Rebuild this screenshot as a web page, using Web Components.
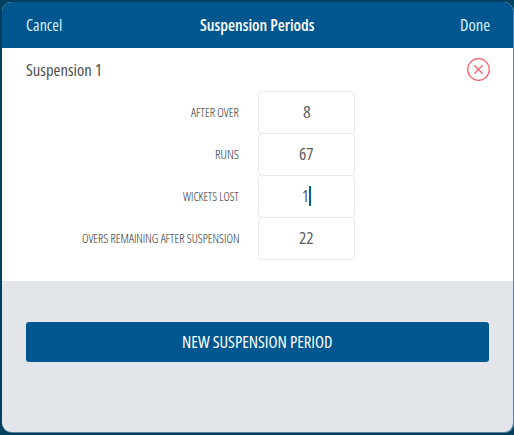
<!DOCTYPE html>
<html lang="en">
<head>
<meta charset="utf-8">
<title>Suspension Periods</title>
<style>
    html, body { margin: 0; height: 100%; }
    body {
        background: #00405f;
        color: #4b4f52;
        font-family: "Open Sans", "Noto Sans", sans-serif;
        font-stretch: 75%;
        font-size: 16px;
        overflow: hidden;
    }
</style>
</head>
<body>
<suspension-dialog>
    <dialog-header slot="header">
        <fit-text slot="left" width="36">Cancel</fit-text>
        <fit-text slot="title" width="115">Suspension Periods</fit-text>
        <fit-text slot="right" width="30">Done</fit-text>
    </dialog-header>
    <suspension-period>
        <fit-text slot="name" width="76">Suspension 1</fit-text>
        <number-field>
            <fit-text slot="label" width="48">AFTER OVER</fit-text>
            <fit-text width="8">8</fit-text>
        </number-field>
        <number-field>
            <fit-text slot="label" width="24">RUNS</fit-text>
            <fit-text width="15">67</fit-text>
        </number-field>
        <number-field active>
            <fit-text slot="label" width="56">WICKETS LOST</fit-text>
            <fit-text width="7">1</fit-text>
        </number-field>
        <number-field>
            <fit-text slot="label" width="157">OVERS REMAINING AFTER SUSPENSION</fit-text>
            <fit-text width="15">22</fit-text>
        </number-field>
    </suspension-period>
    <action-button slot="footer"><fit-text width="151">NEW SUSPENSION PERIOD</fit-text></action-button>
</suspension-dialog>

<script>
class BaseElement extends HTMLElement {
    constructor() {
        super()
        const template = document.createElement('template')
        template.innerHTML = '<style>' + this.constructor.style + '</style>' + this.constructor.template
        this.attachShadow({mode: 'open'})
        this.shadowRoot.appendChild(template.content.cloneNode(true))
    }
}

customElements.define('dialog-header', class extends BaseElement {
    static style = `
        :host {
            display: grid;
            grid-template-columns: 1fr auto 1fr;
            align-items: center;
            height: 46px;
            padding: 1px 24px 0;
            background: #00568f;
            color: #d9f1fa;
            box-sizing: border-box;
        }
        .title { color: #fff; font-weight: 600; }
        .right { text-align: right; margin-right: -1px; }
    `
    static template = `
        <div><slot name="left"></slot></div>
        <div class="title"><slot name="title"></slot></div>
        <div class="right"><slot name="right"></slot></div>
    `
})

customElements.define('close-icon', class extends BaseElement {
    static style = `
        :host { display: block; width: 23px; height: 23px; margin-right: -1px; }
        svg { display: block; fill: none; stroke: #f9626b; stroke-width: 1.3; }
    `
    static template = `
        <svg width="23" height="23" viewBox="0 0 23 23">
            <circle cx="11.5" cy="11.5" r="10.8"/>
            <path d="M7.3 7.3l8.4 8.4M15.7 7.3l-8.4 8.4"/>
        </svg>
    `
})

customElements.define('suspension-period', class extends BaseElement {
    static style = `
        :host { display: block; height: 233px; padding: 9px 24px 0; background: #fff; box-sizing: border-box; }
        header { display: flex; align-items: center; justify-content: space-between; height: 25px; font-weight: 500; }
        .fields { display: grid; margin-top: 9px; }
    `
    static template = `
        <header><slot name="name"></slot><close-icon></close-icon></header>
        <div class="fields"><slot></slot></div>
    `
})

customElements.define('number-field', class extends BaseElement {
    static style = `
        :host { display: grid; grid-template-columns: 213px 97px; column-gap: 19px; align-items: center; height: 42px; }
        .label { padding-top: 1px; text-align: right; font-size: 12.4px; font-weight: 300; color: #26292b; }
        .box {
            display: flex;
            align-items: center;
            justify-content: center;
            height: 43px;
            margin-bottom: -1px;
            padding-bottom: 1px;
            border: 1px solid #e8e9eb;
            border-radius: 4px;
            box-sizing: border-box;
            color: #5a5e61;
        }
        .caret { display: none; width: 2px; height: 20px; background: #0064a0; }
        :host([active]) .caret { display: block; }
    `
    static template = `
        <div class="label"><slot name="label"></slot></div>
        <div class="box"><slot></slot><i class="caret"></i></div>
    `
})

customElements.define('action-button', class extends BaseElement {
    static style = `
        :host {
            display: flex;
            align-items: center;
            justify-content: center;
            height: 40px;
            border-radius: 3px;
            background: #00568f;
            color: #fff;
        }
    `
    static template = `<slot></slot>`
})

customElements.define('suspension-dialog', class extends BaseElement {
    static style = `
        :host {
            display: block;
            height: 430px;
            margin: 2px 1px 0 2px;
            border-radius: 9px;
            background: #e2e5ea;
            box-shadow: 1px 1px 0 #5a8197;
            overflow: hidden;
        }
        footer { padding: 41px 24px 0; }
    `
    static template = `
        <slot name="header"></slot>
        <slot></slot>
        <footer><slot name="footer"></slot></footer>
    `
})

// squeezes its text into the given width, defined last so the
// parents' font sizes and weights are in place when it measures
customElements.define('fit-text', class extends BaseElement {
    static style = `
        :host { display: inline-block; white-space: nowrap; line-height: 20px; text-align: left; vertical-align: top; }
        span { display: inline-block; transform-origin: 0 50%; }
    `
    static template = `<span><slot></slot></span>`
    connectedCallback() {
        const span = this.shadowRoot.querySelector('span')
        const width = Number(this.getAttribute('width'))
        this.style.width = width + 'px'
        span.style.transform = 'scaleX(' + width / span.offsetWidth + ')'
    }
})
</script>
</body>
</html>
